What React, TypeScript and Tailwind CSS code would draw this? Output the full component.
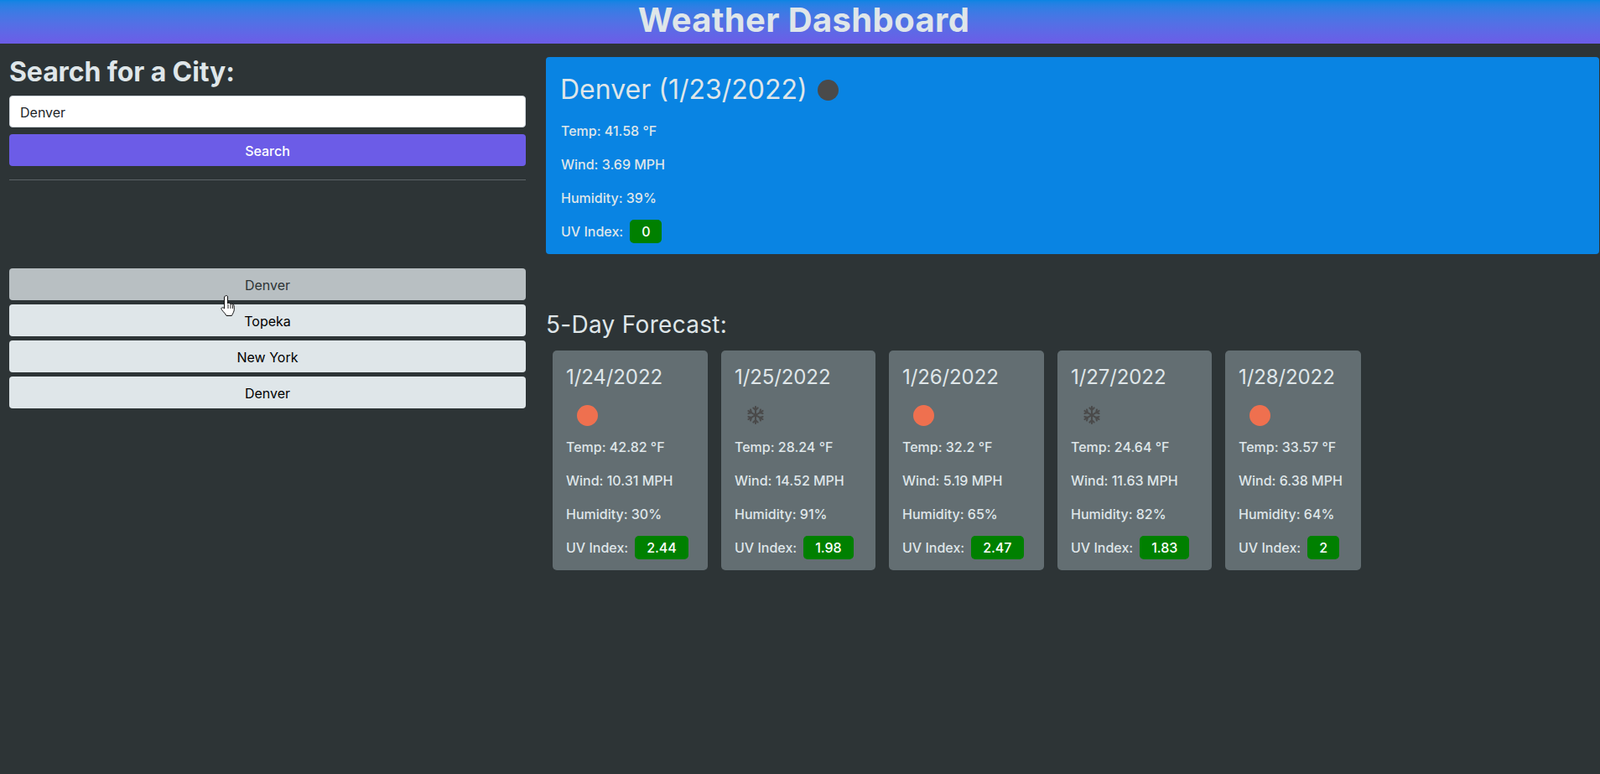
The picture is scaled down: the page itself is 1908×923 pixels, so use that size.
import { FaRegSnowflake } from "react-icons/fa";

interface ForecastDay {
  date: string;
  icon: "sun" | "snow";
  temp: string;
  wind: string;
  humidity: string;
  uv: string;
  width: string;
}

const forecast: ForecastDay[] = [
  { date: "1/24/2022", icon: "sun", temp: "42.82", wind: "10.31", humidity: "30", uv: "2.44", width: "w-[185px]" },
  { date: "1/25/2022", icon: "snow", temp: "28.24", wind: "14.52", humidity: "91", uv: "1.98", width: "w-[184px]" },
  { date: "1/26/2022", icon: "sun", temp: "32.2", wind: "5.19", humidity: "65", uv: "2.47", width: "w-[185px]" },
  { date: "1/27/2022", icon: "snow", temp: "24.64", wind: "11.63", humidity: "82", uv: "1.83", width: "w-[184px]" },
  { date: "1/28/2022", icon: "sun", temp: "33.57", wind: "6.38", humidity: "64", uv: "2", width: "w-[162px]" },
];

const history = ["Denver", "Topeka", "New York", "Denver"];

function UvRow({ value }: { value: string }) {
  return (
    <div className="flex h-7 items-center">
      <span>UV Index:</span>
      <span className="ml-2 rounded-[5px] bg-[#008000] px-[14px] py-0.5 font-medium text-white">
        {value}
      </span>
    </div>
  );
}

function ForecastCard({ day }: { day: ForecastDay }) {
  return (
    <div
      className={`${day.width} h-[262px] rounded-[5px] bg-[#636e72] px-4 pt-[17px] font-[450] text-[#dfe6e9]`}
    >
      <h3 className="text-[24px] leading-[30px] font-normal tracking-[-0.1px]">{day.date}</h3>
      <div className="mt-[12px] flex h-[36px] w-[50px] items-center justify-center">
        {day.icon === "sun" ? (
          <span className="size-[25px] rounded-full bg-[#ef704f]" />
        ) : (
          <FaRegSnowflake className="size-[22px] text-[#4a4a4a]" />
        )}
      </div>
      <div className="mt-2 space-y-4 leading-6">
        <p>Temp: {day.temp} °F</p>
        <p>Wind: {day.wind} MPH</p>
        <p>Humidity: {day.humidity}%</p>
      </div>
      <div className="mt-[14px]">
        <UvRow value={day.uv} />
      </div>
    </div>
  );
}

export default function App() {
  return (
    <div className="relative min-h-[923px] bg-[#2d3436] font-['Inter',sans-serif] text-[16px] text-[#dfe6e9]">
      <header className="h-[52px] bg-gradient-to-b from-[#0984e3] to-[#6c5ce7] pt-px pl-[9px] text-center">
        <h1 className="text-[40px] leading-[46px] font-bold tracking-[0.35px]">Weather Dashboard</h1>
      </header>

      <main className="flex">
        <aside className="w-[651px] shrink-0 pr-6 pl-[11px]">
          <h2 className="mt-[15px] text-[32px] leading-[38px] font-bold tracking-[-0.1px]">
            Search for a City:
          </h2>
          <input
            className="mt-[9px] block h-[38px] w-full rounded-[4px] border border-[#ced4da] bg-white px-3 pt-0.5 text-[#212529]"
            defaultValue="Denver"
          />
          <button className="mt-2 block h-[38px] w-full rounded-[4px] bg-[#6c5ce7] pt-0.5 font-medium text-white">
            Search
          </button>
          <hr className="mt-4 border-[#5c6366]" />
          <div className="mt-[105px] flex flex-col gap-[5px]">
            {history.map((city, index) => (
              <button
                key={index}
                className={`h-[38px] w-full rounded-[4px] pt-0.5 text-center ${
                  index === 0 ? "bg-[#b8bfc2] text-[#2d3436]" : "bg-[#dfe6e9] text-black"
                }`}
              >
                {city}
              </button>
            ))}
          </div>
        </aside>

        <section className="min-w-0 flex-1 pr-px">
          <div className="mt-4 h-[235px] rounded-[4px] bg-[#0984e3] px-[18px] pt-[19px] font-[450]">
            <h2 className="flex items-center text-[32px] leading-10 font-normal">
              <span className="-ml-px">Denver (1/23/2022)</span>
              <span className="ml-[12px] size-[25px] rounded-full bg-[#4a4a4a]" />
            </h2>
            <div className="mt-[17px] space-y-4 leading-6">
              <p>Temp: 41.58 °F</p>
              <p>Wind: 3.69 MPH</p>
              <p>Humidity: 39%</p>
            </div>
            <div className="mt-[14px]">
              <UvRow value="0" />
            </div>
          </div>

          <h2 className="mt-[66px] text-[28px] leading-9 tracking-[0.3px]">5-Day Forecast:</h2>
          <div className="mt-[13px] ml-2 flex gap-4">
            {forecast.map((day) => (
              <ForecastCard key={day.date} day={day} />
            ))}
          </div>
        </section>
      </main>

      <svg
        className="absolute top-[351px] left-[262px] h-[27px] w-[22px]"
        viewBox="0 0 22 27"
      >
        <path
          d="M7 2c1-1 2.500-.5 2.500 1v8l1-.5c1-.3 1.800.2 2 1 .7-.5 2-.3 2.300.7.800-.4 2-.1 2.200 1 .6 3 .5 6-.7 8.500-.6 1.300-1.500 2.800-2 3.800H8c-1-2-3-4-5.500-7-.8-1-.7-2 0-2.500s2-.3 3 1V3c0-.5.700-.8 1.500-1z"
          fill="#fff"
          stroke="#111"
          strokeWidth="1"
        />
        <path d="M10 12v5M13 12v5M15.500 13v4" stroke="#111" strokeWidth="0.9" />
      </svg>
    </div>
  );
}
